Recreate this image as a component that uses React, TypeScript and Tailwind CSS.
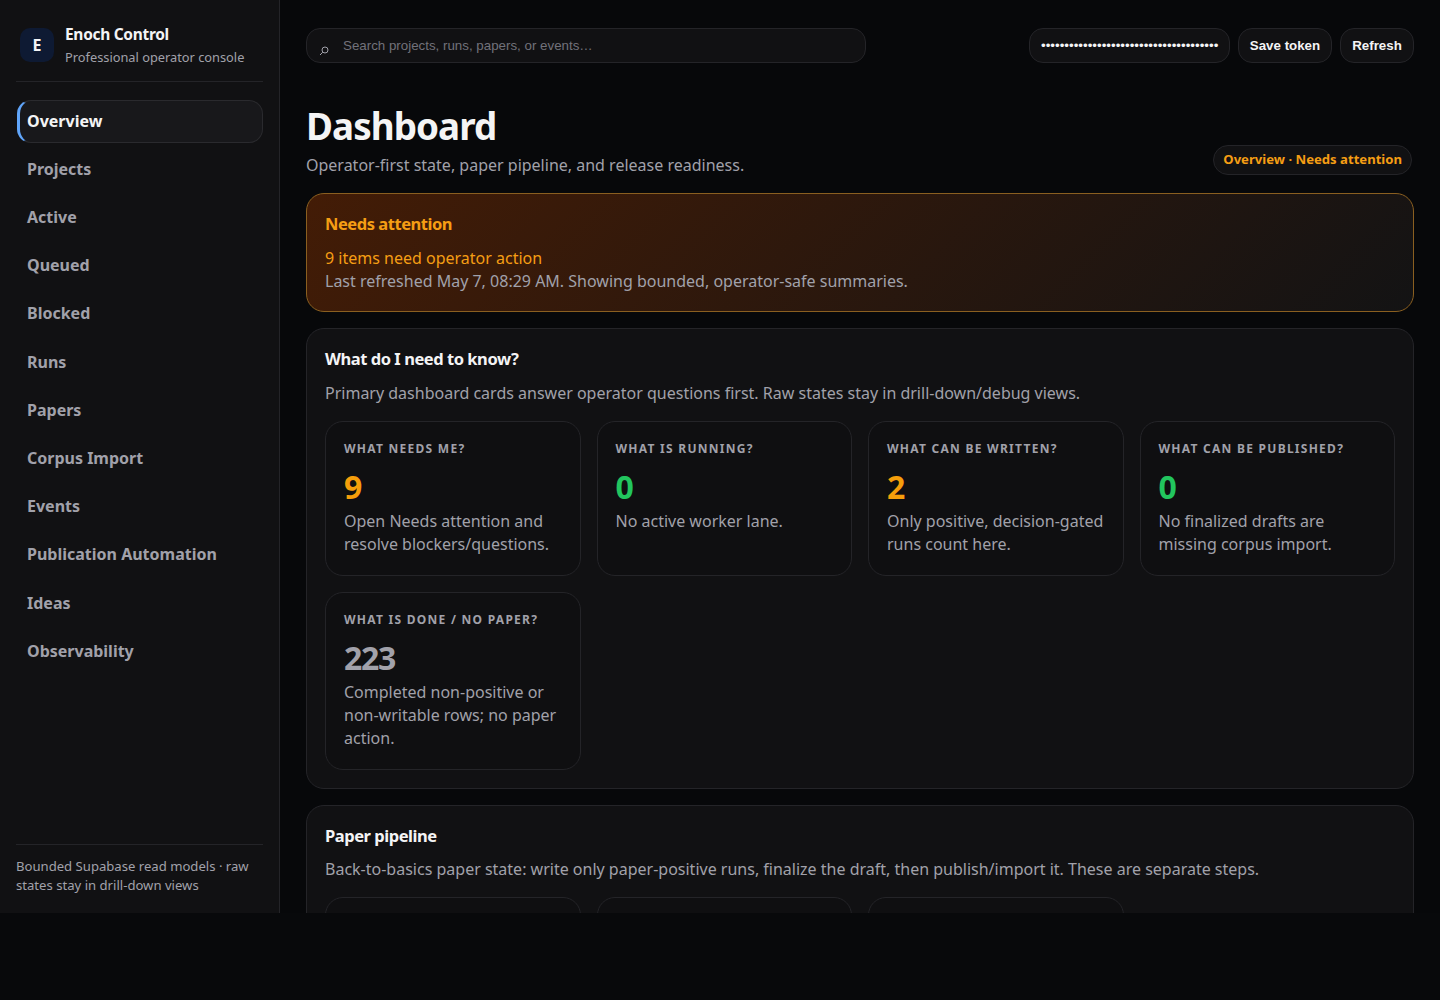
const nav = ["Projects","Active","Queued","Blocked","Runs","Papers","Corpus Import","Events","Publication Automation","Ideas","Observability"];

function Card({ label, value, color, text, tight }: { label: string; value: string; color: string; text: string; tight?: boolean }) {
  return (
    <div className="rounded-[18px] border border-[#242428] bg-[#0f0f11] px-[18px] pt-[19px] pb-[19px]">
      <div className="text-[12px] leading-[16px] font-bold tracking-[0.105em] text-[#a1a1aa] uppercase">{label}</div>
      <div className={`mt-[8px] text-[32px] leading-[44px] font-bold ${tight ? "tracking-[-0.04em]" : ""} ${color}`}>{value}</div>
      <div className="mt-[1px] text-[16px] leading-[23px] text-[#a1a1aa]">{text}</div>
    </div>
  );
}

export default function App() {
  return (
    <div className="h-[1000px] overflow-hidden bg-[#08090b] font-['Noto_Sans',sans-serif]">
      <div className="flex h-[913px] overflow-hidden">
        <aside className="flex w-[280px] shrink-0 flex-col border-r border-[#242428] bg-[#111113] pl-[16px] pr-[16px] pt-[20px] pb-[18px]">
          <div className="flex h-[62px] items-start gap-[11px] border-b border-[#242428] pl-[4px]">
            <div className="mt-[8px] flex h-[34px] w-[34px] items-center justify-center rounded-[10px] bg-[#0e1a33] text-[16px] font-bold text-[#f4f4f5]">E</div>
            <div>
              <div className="text-[15.5px] leading-[28px] font-bold tracking-[-0.02em] text-[#f4f4f5]">Enoch Control</div>
              <div className="text-[12.8px] leading-[18px] text-[#a1a1aa]">Professional operator console</div>
            </div>
          </div>
          <nav className="mt-[18.1px] flex flex-col gap-[6px] pl-[1px]">
            <div className="mb-[-0.4px] flex h-[42.6px] items-center rounded-[14px] border border-[#2a2a2e] border-l-[3px] border-l-[#60a5fa] bg-[#18181b] pb-[1px] pl-[7px] text-[16px] font-bold text-[#f4f4f5]">Overview</div>
            {nav.map((n) => (
              <div key={n} className="flex h-[42.2px] items-center pb-[1px] pl-[10px] text-[16px] font-bold text-[#a1a1aa]">{n}</div>
            ))}
          </nav>
          <div className="mt-auto border-t border-[#242428] pt-[12px] text-[13.12px] leading-[19px] text-[#a1a1aa]">
            Bounded Supabase read models · raw states stay in drill-down views
          </div>
        </aside>
        <main className="min-w-0 flex-1 overflow-hidden bg-[#07080a] px-[26px] pt-[28px]">
          <div className="flex items-center justify-between font-['Liberation_Sans',sans-serif]">
            <div className="relative h-[35px] w-[560px] rounded-[14px] border border-[#242428] bg-[#111113]">
              <svg className="absolute left-[12px] top-[17px]" width="10" height="10" viewBox="0 0 10 10" fill="none" stroke="#a1a1aa" strokeWidth="1"><circle cx="6" cy="4" r="3" /><path d="M3.8 6.2 1 9" /></svg>
              <div className="pl-[36px] text-[13.33px] leading-[33px] text-[#71717a]">Search projects, runs, papers, or events…</div>
            </div>
            <div className="flex gap-[8px]">
              <div className="flex h-[35px] w-[201px] items-center overflow-hidden rounded-[14px] border border-[#242428] bg-[#111113] pl-[11px] text-[13.33px] text-[#f4f4f5]">
                <span>{"•".repeat(38)}</span>
              </div>
              <div className="flex h-[35px] w-[94px] items-center justify-center rounded-[14px] border border-[#242428] bg-[#111113] text-[13.33px] font-bold text-[#f4f4f5]">Save token</div>
              <div className="flex h-[35px] w-[74px] items-center justify-center rounded-[14px] border border-[#242428] bg-[#111113] text-[13.33px] font-bold text-[#f4f4f5]">Refresh</div>
            </div>
          </div>
          <div className="mt-[38px] flex items-end justify-between">
            <div>
              <h1 className="text-[36.8px] leading-[50px] font-bold tracking-[-0.025em] text-[#f4f4f5]">Dashboard</h1>
              <p className="mt-[2px] text-[16px] leading-[24px] text-[#a1a1aa]">Operator-first state, paper pipeline, and release readiness.</p>
            </div>
            <div className="mr-[2px] mb-[2px] flex h-[30px] items-center rounded-full border border-[#242428] bg-[#111113] px-[9px] text-[13.12px] font-bold text-[#f59e14]">Overview · Needs attention</div>
          </div>
          <section className="mt-[16px] rounded-[18px] border border-[#8a5f20] bg-[linear-gradient(135deg,#431c06,#131314)] px-[18px] pt-[18px] pb-[18px]">
            <h2 className="text-[16.5px] leading-[24px] font-bold tracking-[-0.028em] text-[#f59e14]">Needs attention</h2>
            <div className="mt-[11px] text-[16px] leading-[23px] text-[#f59e14]">9 items need operator action</div>
            <div className="text-[16px] leading-[23px] text-[#a1a1aa]">Last refreshed May 7, 08:29 AM. Showing bounded, operator-safe summaries.</div>
          </section>
          <section className="mt-[16px] rounded-[18px] border border-[#242428] bg-[#111113] px-[18px] pt-[18px] pb-[18px]">
            <h2 className="text-[16.5px] leading-[24px] font-bold tracking-[-0.028em] text-[#f4f4f5]">What do I need to know?</h2>
            <p className="mt-[11px] text-[16px] leading-[23px] text-[#a1a1aa]">Primary dashboard cards answer operator questions first. Raw states stay in drill-down/debug views.</p>
            <div className="mt-[16px] grid grid-cols-4 gap-[16px]">
              <Card label="What needs me?" value="9" color="text-[#f59e0b]" text="Open Needs attention and resolve blockers/questions." />
              <Card label="What is running?" value="0" color="text-[#22c55e]" text="No active worker lane." />
              <Card label="What can be written?" value="2" color="text-[#f59e0b]" text="Only positive, decision-gated runs count here." />
              <Card label="What can be published?" value="0" color="text-[#22c55e]" text="No finalized drafts are missing corpus import." />
              <Card label="What is done / no paper?" value="223" color="text-[#a1a1aa]" tight text="Completed non-positive or non-writable rows; no paper action." />
            </div>
          </section>
          <section className="mt-[16px] rounded-[18px] border border-[#242428] bg-[#111113] px-[18px] pt-[18px] pb-[18px]">
            <h2 className="text-[16.5px] leading-[24px] font-bold tracking-[-0.028em] text-[#f4f4f5]">Paper pipeline</h2>
            <p className="mt-[10px] text-[16px] leading-[23px] text-[#a1a1aa]">Back-to-basics paper state: write only paper-positive runs, finalize the draft, then publish/import it. These are separate steps.</p>
            <div className="mt-[16px] grid grid-cols-4 gap-[16px]">
              <div className="h-[150px] rounded-[18px] border border-[#242428] bg-[#0f0f11]" />
              <div className="h-[150px] rounded-[18px] border border-[#242428] bg-[#0f0f11]" />
              <div className="h-[150px] rounded-[18px] border border-[#242428] bg-[#0f0f11]" />
            </div>
          </section>
        </main>
      </div>
    </div>
  );
}
